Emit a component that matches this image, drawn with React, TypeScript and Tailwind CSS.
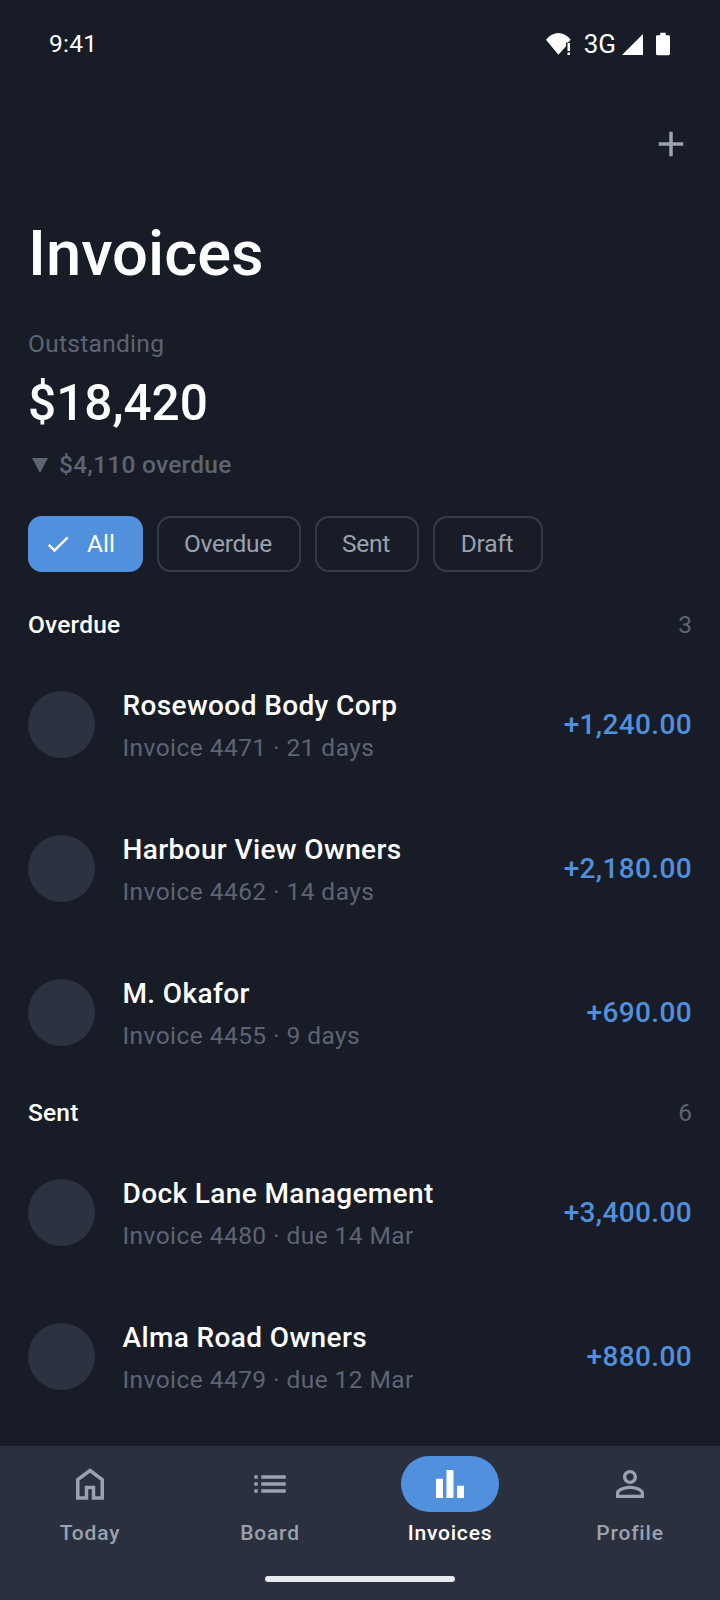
import React from 'react';

const font = { fontFamily: 'Roboto, sans-serif' };

interface RowProps {
  name: string;
  detail: string;
  amount: string;
}

const Row: React.FC<RowProps> = ({ name, detail, amount }) => (
  <div className="flex items-center h-[144px] px-[28px]">
    <div className="w-[67px] h-[67px] rounded-full bg-[#2c323f] shrink-0" />
    <div className="ml-[27.5px] mt-[6px] flex-1 min-w-0">
      <div className="text-[28px] leading-[42px] font-medium tracking-[0.38px] text-white">{name}</div>
      <div className="text-[24.5px] leading-[42px] tracking-[0.44px] text-[#5d6473]">{detail}</div>
    </div>
    <div className="mt-[2px] text-[28px] font-medium tracking-[0.36px] text-[#5090dc]">{amount}</div>
  </div>
);

const SectionHead: React.FC<{ title: string; count: number }> = ({ title, count }) => (
  <div className="flex items-center justify-between h-[40px] px-[28px] mb-[7px]">
    <span className="text-[24.5px] font-medium tracking-[0.2px] text-white">{title}</span>
    <span className="text-[24.5px] text-[#5d6473]">{count}</span>
  </div>
);

const Chip: React.FC<{ label: string; width: string }> = ({ label, width }) => (
  <div className={`${width} h-[56px] pr-[2px] rounded-[14px] border-2 border-[#353b49] flex items-center justify-center text-[24.5px] tracking-[-0.25px] text-[#9aa1af]`}>
    {label}
  </div>
);

const NavItem: React.FC<{ label: string; d: string; active?: boolean }> = ({ label, d, active }) => (
  <div className="flex-1 flex flex-col items-center">
    <div className={`w-[98px] h-[56px] rounded-full flex items-center justify-center ${active ? 'bg-[#5090dc]' : ''}`}>
      <svg width="42" height="42" viewBox="0 0 24 24" fill={active ? '#ffffff' : '#9aa1af'}>
        <path fillRule="evenodd" d={d} />
      </svg>
    </div>
    <div className={`mt-[6px] text-[21px] leading-[30px] font-medium tracking-[0.8px] ${active ? 'text-white' : 'text-[#9aa1af]'}`}>
      {label}
    </div>
  </div>
);

export default function App() {
  return (
    <div style={font} className="w-[720px] h-[1600px] bg-[#181c27] flex flex-col overflow-hidden">
      {/* status bar */}
      <div className="h-[88px] shrink-0 flex items-center justify-between pl-[49px] pr-[50px] text-white">
        <span className="text-[24.5px] tracking-[0.3px]">9:41</span>
        <div className="flex items-center">
          <svg width="25" height="22" viewBox="0 0 25 22" fill="#ffffff">
            <path d="M0 6.700C3.500 2.300 8 0 12.400 0s8.900 2.300 12.300 6.700L22 9.500h-2v3.800L12.400 21.800z" />
            <rect x="21.500" y="10" width="2.500" height="8" />
            <rect x="21.500" y="19.500" width="2.500" height="2.500" />
          </svg>
          <span className="ml-[13px] text-[26px] leading-none">3G</span>
          <svg className="ml-[5px]" width="23" height="23" viewBox="0 0 23 23" fill="#ffffff">
            <path d="M22 1v21H1z" />
          </svg>
          <svg className="ml-[12px]" width="14" height="24" viewBox="0 0 15 24" fill="#ffffff">
            <path d="M4.500 0h6v2.500h3a1.500 1.500 0 0 1 1.500 1.500v18.500a1.500 1.500 0 0 1-1.500 1.500h-12A1.500 1.500 0 0 1 0 22.500V4a1.500 1.500 0 0 1 1.500-1.500h3z" />
          </svg>
        </div>
      </div>

      {/* add action */}
      <div className="h-[112px] shrink-0 flex items-center justify-end pr-[28px]">
        <svg width="42" height="42" viewBox="0 0 24 24" fill="#9aa1af">
          <path d="M19 13h-6v6h-2v-6H5v-2h6V5h2v6h6v2z" />
        </svg>
      </div>

      <div className="px-[28px] mt-[17px]">
        <div className="text-[63.3px] leading-[72px] font-medium text-white">Invoices</div>
        <div className="mt-[35px] text-[24.5px] leading-[40px] tracking-[0.3px] text-[#5d6473]">Outstanding</div>
        <div className="mt-[10px] text-[49.5px] leading-[58px] font-medium text-white">$18,420</div>
        <div className="mt-[13px] text-[24.5px] leading-[40px] font-medium tracking-[0.25px] text-[#5d6473] flex items-center">
          <svg className="ml-[4px]" width="16" height="15" viewBox="0 0 16 15" fill="#5d6473">
            <path d="M0 0h16L8 15z" />
          </svg>
          <span className="ml-[11px]">$4,110 overdue</span>
        </div>
      </div>

      {/* filter chips */}
      <div className="flex gap-[14px] px-[28px] mt-[31px]">
        <div className="w-[115px] h-[56px] rounded-[14px] bg-[#5090dc] flex items-center pl-[16px] text-[24.5px] text-white">
          <svg width="28" height="28" viewBox="0 0 24 24" fill="#ffffff">
            <path d="M9 16.170 4.830 12l-1.420 1.410L9 19 21 7l-1.410-1.410z" />
          </svg>
          <span className="ml-[15px]">All</span>
        </div>
        <Chip label="Overdue" width="w-[144px]" />
        <Chip label="Sent" width="w-[104px]" />
        <Chip label="Draft" width="w-[110px]" />
      </div>

      <div className="mt-[33px]">
        <SectionHead title="Overdue" count={3} />
        <Row name="Rosewood Body Corp" detail="Invoice 4471 · 21 days" amount="+1,240.00" />
        <Row name="Harbour View Owners" detail="Invoice 4462 · 14 days" amount="+2,180.00" />
        <Row name="M. Okafor" detail="Invoice 4455 · 9 days" amount="+690.00" />
        <div className="mt-[9px]">
          <SectionHead title="Sent" count={6} />
        </div>
        <Row name="Dock Lane Management" detail="Invoice 4480 · due 14 Mar" amount="+3,400.00" />
        <Row name="Alma Road Owners" detail="Invoice 4479 · due 12 Mar" amount="+880.00" />
      </div>

      {/* bottom nav */}
      <div className="mt-auto h-[154px] shrink-0 bg-[#2a303e] flex flex-col">
        <div className="flex pt-[10px]">
          <NavItem label="Today" d="M4 21V9l8-6 8 6v12h-7v-6h-2v6H4zm2-2h3v-6h6v6h3v-9l-6-4.500L6 10v9z" />
          <NavItem label="Board" d="M3 13h2v-2H3v2zm0 4h2v-2H3v2zm0-8h2V7H3v2zm4 4h14v-2H7v2zm0 4h14v-2H7v2zM7 7v2h14V7H7z" />
          <NavItem label="Invoices" active d="M4 20V9h4v11H4zm6 0V4h4v16h-4zm6 0v-7h4v7h-4z" />
          <NavItem label="Profile" d="M12 5.900c1.160 0 2.100.940 2.100 2.100s-.940 2.100-2.100 2.100S9.900 9.160 9.900 8s.940-2.100 2.100-2.100m0 9c2.970 0 6.100 1.460 6.100 2.100v1.100H5.900V17c0-.640 3.130-2.100 6.100-2.100M12 4C9.790 4 8 5.790 8 8s1.790 4 4 4 4-1.790 4-4-1.790-4-4-4zm0 9c-2.670 0-8 1.340-8 4v3h16v-3c0-2.660-5.330-4-8-4z" />
        </div>
        <div className="mt-auto mb-[18px] mx-auto w-[190px] h-[6px] rounded-full bg-[#e8eaee]" />
      </div>
    </div>
  );
}
